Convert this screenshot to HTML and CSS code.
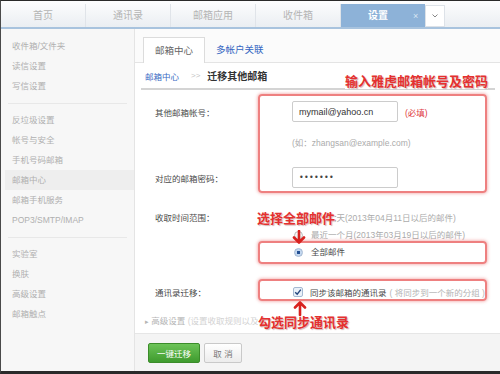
FILE: index.html
```html
<!DOCTYPE html>
<html lang="zh-CN">
<head>
  <meta charset="UTF-8">
  <title>设置 - 迁移其他邮箱</title>
  <link rel="stylesheet" href="styles.css">
</head>
<body>
  <div class="screen">
    <div class="topbar">
      <div class="nav-tab">首页</div>
      <div class="nav-tab">通讯录</div>
      <div class="nav-tab">邮箱应用</div>
      <div class="nav-tab">收件箱</div>
      <div class="nav-tab active">设置<span class="close">×</span></div>
      <div class="nav-more">
        <svg width="6" height="4" viewBox="0 0 6 4"><path d="M0.5 0.5 L3 3 L5.5 0.5" fill="none" stroke="#888" stroke-width="1"/></svg>
      </div>
    </div>

    <div class="frame">
      <ul class="sidebar">
        <li>收件箱/文件夹</li>
        <li>读信设置</li>
        <li>写信设置</li>
        <li class="side-sep"></li>
        <li>反垃圾设置</li>
        <li>帐号与安全</li>
        <li>手机号码邮箱</li>
        <li class="current">邮箱中心</li>
        <li>邮箱手机服务</li>
        <li>POP3/SMTP/IMAP</li>
        <li class="side-sep"></li>
        <li>实验室</li>
        <li>换肤</li>
        <li>高级设置</li>
        <li>邮箱触点</li>
      </ul>

      <div class="main">
        <div class="subtabs">
          <a class="subtab on">邮箱中心</a>
          <a class="subtab">多帐户关联</a>
        </div>
        <div class="crumb">
          <a>邮箱中心</a><span class="sep">&gt;&gt;</span><b>迁移其他邮箱</b>
        </div>

        <div class="form">
          <div class="row">
            <label>其他邮箱帐号：</label>
            <input class="field" type="text" value="mymail@yahoo.cn">
            <span class="req">(必填)</span>
          </div>
          <div class="hint">(如：zhangsan@example.com)</div>
          <div class="row row-pass">
            <label>对应的邮箱密码：</label>
            <input class="field pass" type="text" value="•••••••">
          </div>
          <div class="row row-range">
            <label>收取时间范围：</label>
            <div class="options">
              <div class="opt"><span class="radio"></span>最近七天(2013年04月11日以后的邮件)</div>
              <div class="opt"><span class="radio"></span>最近一个月(2013年03月19日以后的邮件)</div>
              <div class="opt checked"><span class="radio on"></span>全部邮件</div>
            </div>
          </div>
          <div class="row row-sync">
            <label>通讯录迁移：</label>
            <span class="check">
              <svg width="8" height="8" viewBox="0 0 8 8"><path d="M1.2 4.2 L3.2 6.2 L6.8 1.6" fill="none" stroke="#24467e" stroke-width="1.4"/></svg>
            </span>
            同步该邮箱的通讯录<span class="sync-note">( 将同步到一个新的分组 )</span>
          </div>
          <div class="advanced">
            <span class="tri">▸</span> 高级设置 <span class="adv-note">(设置收取规则以及收取方式)</span>
          </div>
        </div>

        <div class="footer">
          <button class="btn-ok">一键迁移</button>
          <button class="btn-cancel">取 消</button>
        </div>
      </div>
    </div>

    <!-- annotations drawn over the screenshot -->
    <div class="mark mark-account"></div>
    <div class="mark mark-all"></div>
    <div class="mark mark-sync"></div>
    <div class="note note-account">输入雅虎邮箱帐号及密码</div>
    <div class="note note-all">选择全部邮件</div>
    <div class="note note-sync">勾选同步通讯录</div>
    <svg class="arrow arrow-down" width="14" height="14" viewBox="0 0 14 14">
      <path d="M7 1 V12 M2 7.5 L7 12.5 L12 7.5" fill="none" stroke="#d8221f" stroke-width="2.6" stroke-linecap="round" stroke-linejoin="round"/>
    </svg>
    <svg class="arrow arrow-up" width="14" height="15" viewBox="0 0 14 15">
      <path d="M7 14 V2 M2 6.5 L7 1.5 L12 6.5" fill="none" stroke="#d8221f" stroke-width="2.6" stroke-linecap="round" stroke-linejoin="round"/>
    </svg>
  </div>
</body>
</html>
```

FILE: styles.css
```css
body {
  margin: 0;
  background: #fff;
}
.screen {
  position: relative;
  width: 500px;
  height: 374px;
  box-sizing: border-box;
  border-top: 1px solid #2a2a2a;
  border-left: 1px solid #4a4a4a;
  border-bottom: 3px solid #2a2a2a;
  background: #fff;
  overflow: hidden;
  font-family: "Liberation Sans", "Noto Sans CJK SC", sans-serif;
}

/* top navigation */
.topbar {
  display: flex;
  align-items: flex-end;
  height: 26px;
  border-bottom: 2px solid #a8c3de;
  background: linear-gradient(#fdfdfe, #eaeef2);
}
.nav-tab {
  width: 84px;
  height: 23px;
  line-height: 23px;
  text-align: center;
  font-size: 10px;
  color: #b4b4b4;
  border-right: 1px solid #e0e4e9;
}
.nav-tab.active {
  width: 57px;
  padding-left: 27px;
  text-align: left;
  background: #8db2d8;
  color: #fff;
  font-weight: bold;
  border-right: none;
}
.nav-tab .close {
  margin-left: 25px;
  font-weight: normal;
  font-size: 9px;
  color: #d9e6f3;
}
.nav-more {
  width: 20px;
  height: 22px;
  box-sizing: border-box;
  border: 1px solid #dde2e8;
  background: #fff;
  display: flex;
  align-items: center;
  justify-content: center;
}

.frame {
  display: flex;
  height: 342px;
}

/* left menu */
.sidebar {
  width: 133px;
  margin: 0;
  padding: 7px 0 0;
  list-style: none;
  background: #f7f7f7;
  border-right: 1px solid #e4e4e4;
  font-size: 8.5px;
  color: #b0b0b0;
}
.sidebar li {
  height: 20px;
  line-height: 20px;
  margin-left: 4px;
  padding-left: 7px;
}
.sidebar li.current {
  background: #eeeeee;
}
.sidebar li.side-sep {
  height: 1px;
  margin: 7px 7px 6px;
  padding: 0;
  background: #e8e8e8;
}

/* main panel */
.main {
  flex: 1;
  display: flex;
  flex-direction: column;
  background: #fff;
}
.subtabs {
  height: 33px;
  display: flex;
  align-items: flex-end;
  padding-left: 8px;
  background: #fbfbfb;
  border-bottom: 1px solid #e4e4e4;
}
.subtab {
  height: 25px;
  line-height: 25px;
  padding: 0 11px;
  font-size: 9.5px;
  color: #3567c2;
}
.subtab.on {
  background: #fff;
  border: 1px solid #dcdcdc;
  border-bottom: none;
  margin-bottom: -1px;
  color: #666;
}
.crumb {
  height: 25px;
  margin: 0 5px 0 6px;
  padding-left: 4px;
  display: flex;
  align-items: center;
  border-bottom: 2px solid #d4d4d4;
  font-size: 8.5px;
}
.crumb a {
  color: #3a6bc4;
}
.crumb .sep {
  margin: 0 7px 0 12px;
  color: #c4c4c4;
  font-size: 8px;
}
.crumb b {
  font-size: 10px;
  color: #333;
}

/* form */
.form {
  flex: 1;
  padding: 11px 0 0 20px;
  font-size: 8.5px;
  color: #4a4a4a;
}
.row {
  display: flex;
  align-items: center;
}
.row label {
  width: 137px;
  flex: none;
}
.field {
  width: 106px;
  height: 21px;
  box-sizing: border-box;
  margin: 0;
  padding: 0 6px;
  border: 1px solid #cccccc;
  border-radius: 2px;
  font: 9px "Liberation Sans", "Noto Sans CJK SC", sans-serif;
  color: #333;
}
.field.pass {
  font: 8px "DejaVu Sans", sans-serif;
  letter-spacing: 0.3px;
  color: #444;
}
.req {
  margin-left: 7px;
  color: #e0393e;
}
.hint {
  margin: 15px 0 0 137px;
  line-height: 12px;
  color: #ababab;
}
.row-pass {
  margin-top: 18px;
}
.row-range {
  align-items: flex-start;
  margin-top: 22px;
  line-height: 17px;
}
.options {
  display: flex;
  flex-direction: column;
}
.opt {
  display: flex;
  align-items: center;
  height: 17px;
  color: #ababab;
}
.opt.checked {
  color: #4a4a4a;
}
.radio {
  width: 9px;
  height: 9px;
  box-sizing: border-box;
  margin: 0 8px 0 2px;
  border: 1px solid #b8b8b8;
  border-radius: 50%;
  background: linear-gradient(#fff, #e6e6e6);
}
.radio.on {
  border-color: #a3b8d2;
  background: radial-gradient(circle, #234f93 0 1.4px, #c3d7ef 2px 100%);
}
.row-sync {
  height: 17px;
  margin-top: 22px;
}
.check {
  width: 10px;
  height: 10px;
  box-sizing: border-box;
  margin: 0 7px 0 1px;
  border: 1px solid #a5b9d2;
  border-radius: 2px;
  background: #eaf1f9;
  display: flex;
  align-items: center;
  justify-content: center;
}
.sync-note {
  margin-left: 3px;
  color: #b4b4b4;
}
.advanced {
  margin: 13px 0 0 -10px;
  line-height: 17px;
  color: #b4b4b4;
}
.advanced .tri {
  font-size: 7px;
}
.adv-note {
  color: #d2d2d2;
}

/* bottom buttons */
.footer {
  height: 38px;
  box-sizing: border-box;
  padding: 9px 0 0 13px;
  display: flex;
  align-items: flex-start;
  gap: 4px;
  background: #f4f4f4;
  border-top: 1px solid #e6e6e6;
}
.footer button {
  height: 20px;
  padding: 0;
  border-radius: 2px;
  font: 8.5px "Liberation Sans", "Noto Sans CJK SC", sans-serif;
}
.btn-ok {
  width: 52px;
  background: linear-gradient(#6cc357, #3f9b2e);
  border: 1px solid #3b8c2a;
  color: #fff;
}
.btn-cancel {
  width: 38px;
  background: linear-gradient(#fff, #ececec);
  border: 1px solid #c9c9c9;
  color: #777;
}

/* red annotations */
.mark {
  position: absolute;
  box-sizing: border-box;
  border: 2px solid #ee8080;
  border-radius: 4px;
  box-shadow: 0 0 3px 1px rgba(225, 70, 70, 0.35);
}
.mark-account { left: 257px; top: 93px; width: 229px; height: 99px; }
.mark-all { left: 257px; top: 240px; width: 229px; height: 23px; }
.mark-sync { left: 257px; top: 278px; width: 229px; height: 22px; }
.note {
  position: absolute;
  font: bold 13px/16px "Noto Sans CJK SC", sans-serif;
  color: #e5302f;
  background: #fff;
  text-shadow: 1px 1px 1px rgba(110, 0, 0, 0.3);
  white-space: nowrap;
}
.note-account { left: 344px; top: 72px; }
.note-all { left: 256px; top: 209px; }
.note-sync { left: 257px; top: 313px; }
.arrow {
  position: absolute;
}
.arrow-down { left: 291px; top: 229px; }
.arrow-up { left: 292px; top: 300px; }
```
